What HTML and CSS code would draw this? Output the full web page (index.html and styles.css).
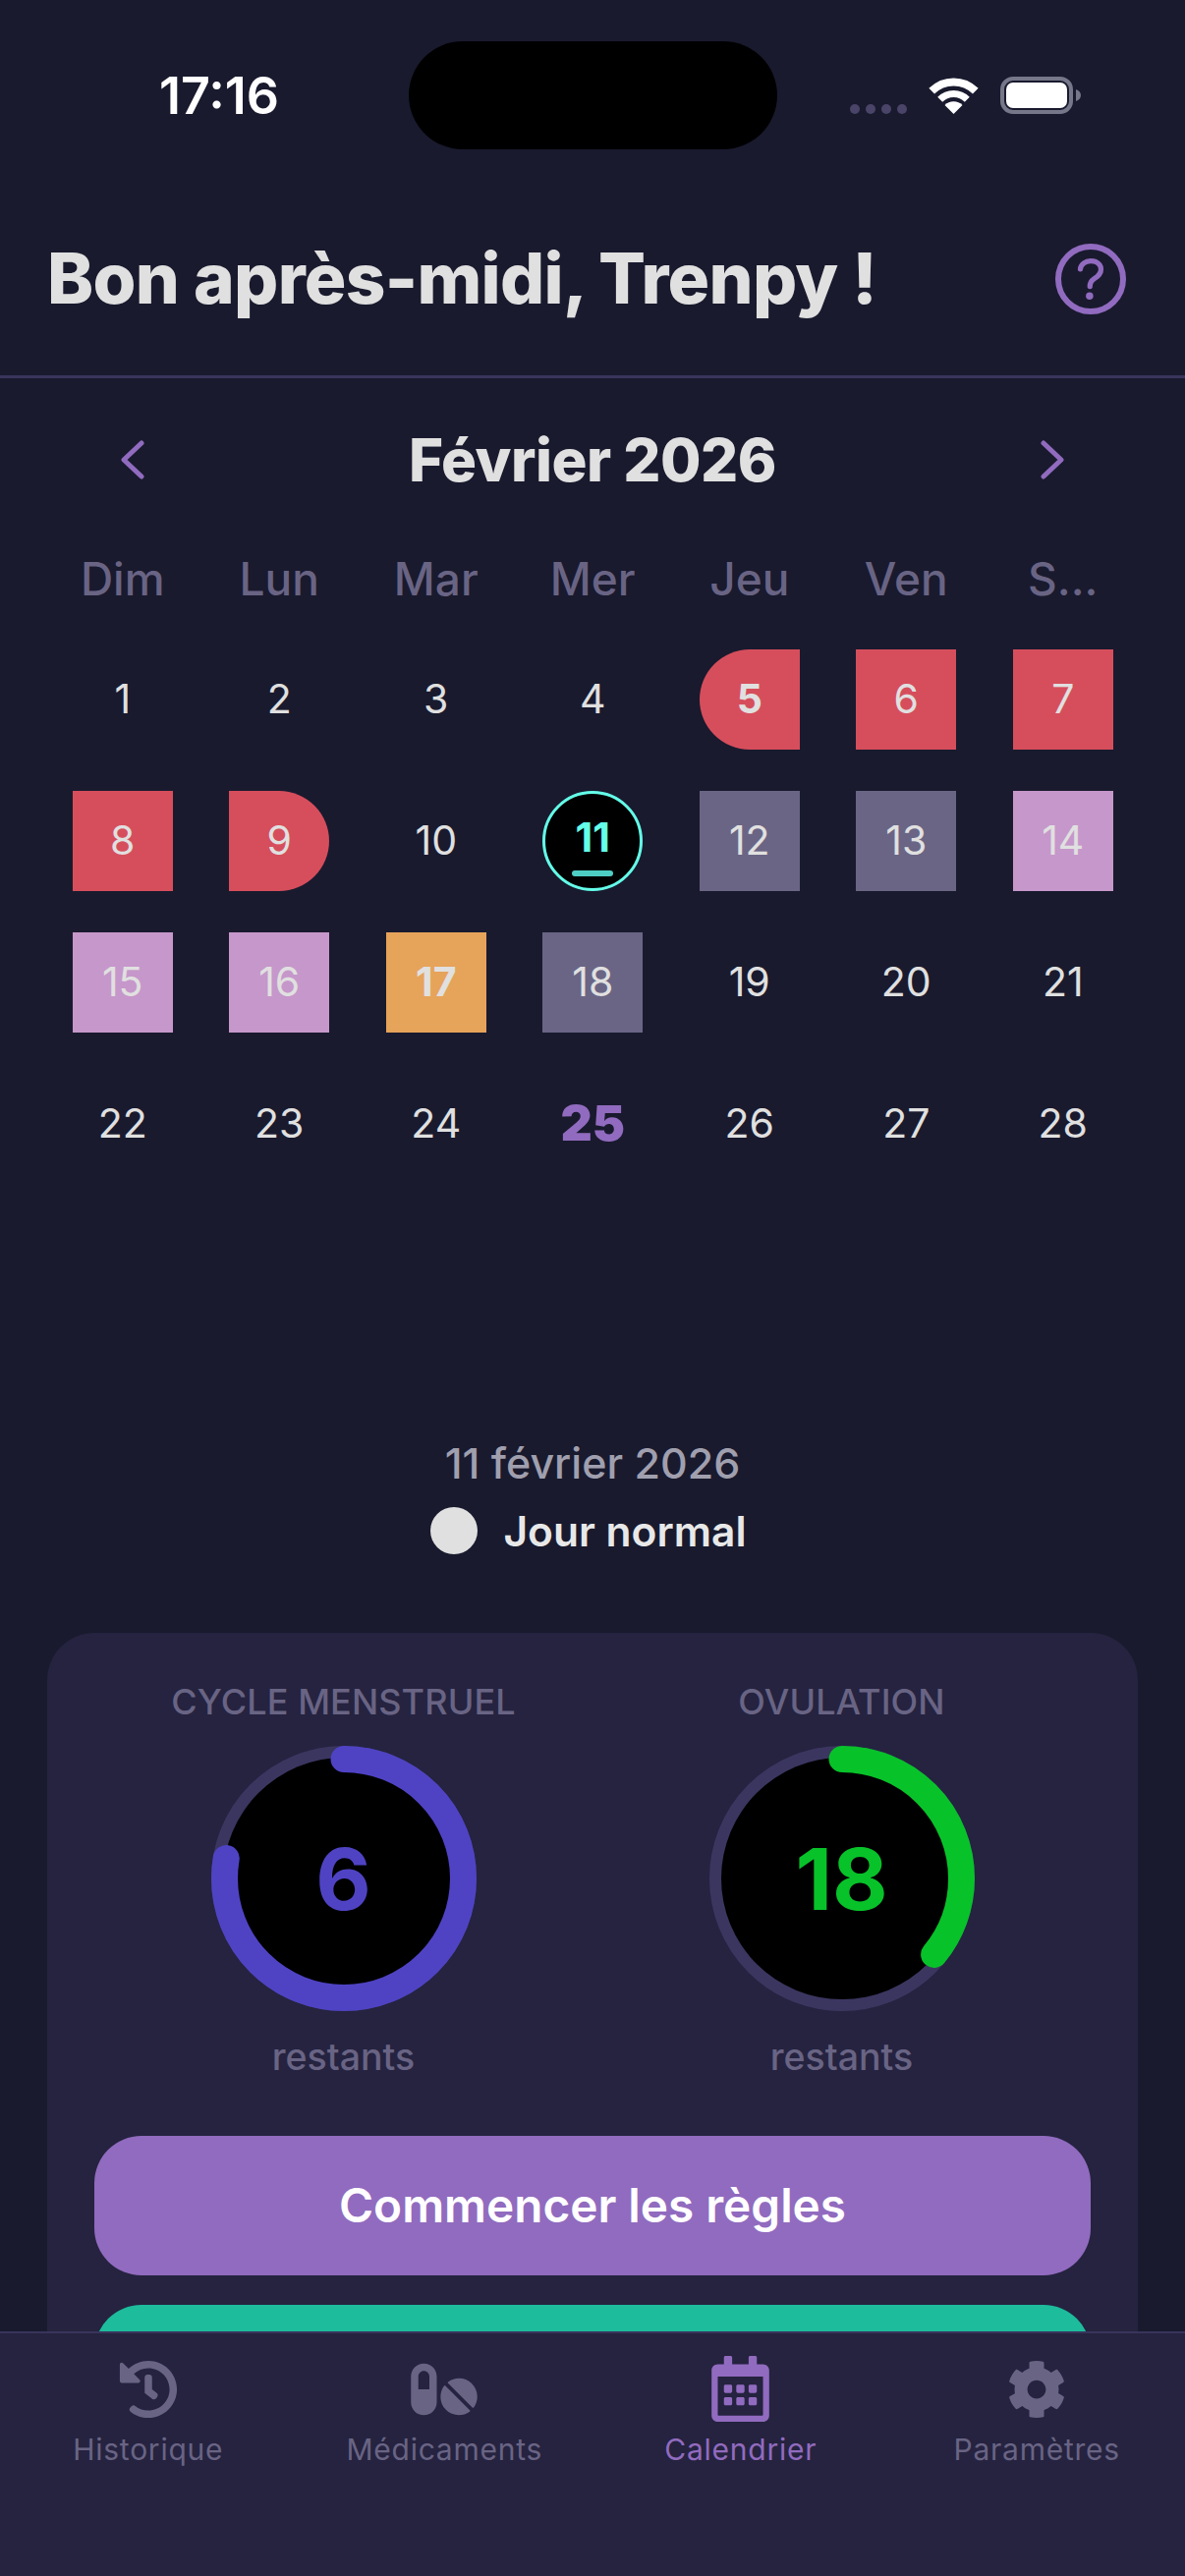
FILE: index.html
```html
<!DOCTYPE html>
<html lang="fr">
<head>
  <meta charset="UTF-8" />
  <meta name="viewport" content="width=device-width, initial-scale=1.0"/>
  <title>Calendrier</title>
  <link rel="stylesheet" href="styles.css">
</head>
<body>
  <div class="app">
    <div class="status-bar">
      <div class="status-time">17:16</div>
      <div class="island"></div>
      <div class="status-icons">
        <div class="signal"><span></span><span></span><span></span><span></span></div>
        <svg class="wifi" width="51" height="37" viewBox="0 0 51 37">
          <path d="M3.2 13.7A31.5 31.5 0 0 1 47.8 13.7" fill="none" stroke="#fff" stroke-width="8"/>
          <path d="M11.7 22.2A19.5 19.5 0 0 1 39.3 22.2" fill="none" stroke="#fff" stroke-width="7"/>
          <path d="M25.5 37L16.5 28A12.7 12.7 0 0 1 34.5 28Z" fill="#fff"/>
        </svg>
        <svg class="battery" width="82" height="38" viewBox="0 0 82 38">
          <rect x="2" y="2" width="70" height="34" rx="11" fill="none" stroke="#77778a" stroke-width="4"/>
          <rect x="6" y="6" width="62" height="26" rx="7" fill="#fff"/>
          <path d="M77 13c3 1 5 3 5 6s-2 5-5 6z" fill="#77778a"/>
        </svg>
      </div>
    </div>

    <header class="top-header">
      <h1>Bon après-midi, Trenpy !</h1>
      <svg class="help-icon" width="96" height="96" viewBox="0 0 512 512">
        <path d="M256 80a176 176 0 10176 176A176 176 0 00256 80z" fill="none" stroke="#916bbf" stroke-width="32" stroke-miterlimit="10"/>
        <path d="M200 202.29s.84-17.5 19.57-32.57C230.68 160.77 244 158.18 256 158c10.93-.14 20.69 1.67 26.53 4.45 10 4.76 29.47 16.38 29.47 41.09 0 26-17 37.81-36.37 50.8S252 281.43 252 296" fill="none" stroke="#916bbf" stroke-width="28" stroke-linecap="round" stroke-miterlimit="10"/>
        <circle cx="250" cy="348" r="20" fill="#916bbf"/>
      </svg>
    </header>

    <main class="content">
      <section class="calendar">
        <div class="month-nav">
          <svg width="24" height="40" viewBox="0 0 24 40"><path d="M21 3L3 20l18 17" fill="none" stroke="#916bbf" stroke-width="5" stroke-linecap="round" stroke-linejoin="round"/></svg>
          <h2>Février 2026</h2>
          <svg width="24" height="40" viewBox="0 0 24 40"><path d="M3 3l18 17L3 37" fill="none" stroke="#916bbf" stroke-width="5" stroke-linecap="round" stroke-linejoin="round"/></svg>
        </div>

        <div class="weekdays">
          <div>Dim</div><div>Lun</div><div>Mar</div><div>Mer</div><div>Jeu</div><div>Ven</div><div>S...</div>
        </div>

        <div class="days">
          <div class="day">1</div>
          <div class="day">2</div>
          <div class="day">3</div>
          <div class="day">4</div>
          <div class="day red start bold">5</div>
          <div class="day red">6</div>
          <div class="day red">7</div>
          <div class="day red">8</div>
          <div class="day red end">9</div>
          <div class="day">10</div>
          <div class="day today">11</div>
          <div class="day gray">12</div>
          <div class="day gray">13</div>
          <div class="day pink">14</div>
          <div class="day pink">15</div>
          <div class="day pink">16</div>
          <div class="day orange bold">17</div>
          <div class="day gray">18</div>
          <div class="day">19</div>
          <div class="day">20</div>
          <div class="day">21</div>
          <div class="day">22</div>
          <div class="day">23</div>
          <div class="day">24</div>
          <div class="day next">25</div>
          <div class="day">26</div>
          <div class="day">27</div>
          <div class="day">28</div>
        </div>
      </section>

      <section class="selected-day">
        <div class="selected-date">11 février 2026</div>
        <div class="day-type">
          <span class="day-dot"></span>
          <span>Jour normal</span>
        </div>
      </section>

      <section class="card">
        <div class="rings">
          <div class="ring-block">
            <div class="ring-title">CYCLE MENSTRUEL</div>
            <div class="ring">
              <svg width="270" height="270" viewBox="0 0 270 270">
                <circle cx="135" cy="135" r="128.5" fill="none" stroke="#3b3660" stroke-width="13"/>
                <circle cx="135" cy="135" r="123" fill="#000"/>
                <circle cx="135" cy="135" r="121.5" fill="none" stroke="#4f43c4" stroke-width="27" stroke-linecap="round" pathLength="100" stroke-dasharray="77.7 100" transform="rotate(-90 135 135)"/>
              </svg>
              <div class="ring-value purple">6</div>
            </div>
            <div class="ring-sub">restants</div>
          </div>
          <div class="ring-block">
            <div class="ring-title">OVULATION</div>
            <div class="ring">
              <svg width="270" height="270" viewBox="0 0 270 270">
                <circle cx="135" cy="135" r="128.5" fill="none" stroke="#3b3660" stroke-width="13"/>
                <circle cx="135" cy="135" r="123" fill="#000"/>
                <circle cx="135" cy="135" r="121.5" fill="none" stroke="#08c22a" stroke-width="27" stroke-linecap="round" pathLength="100" stroke-dasharray="36 100" transform="rotate(-90 135 135)"/>
              </svg>
              <div class="ring-value green">18</div>
            </div>
            <div class="ring-sub">restants</div>
          </div>
        </div>
        <button class="action primary">Commencer les règles</button>
        <div class="action secondary"></div>
      </section>
    </main>

    <nav class="tabs">
      <div class="tab">
        <div class="tab-icon">
          <svg width="60" height="60" viewBox="0 0 512 512"><path d="M504 255.531c.253 136.64-111.18 248.372-247.82 248.468-59.015.042-113.223-20.53-155.822-54.911-11.077-8.94-11.905-25.541-1.839-35.607l11.267-11.267c8.609-8.609 22.353-9.551 31.891-1.984C173.062 425.135 212.781 440 256 440c101.705 0 184-82.311 184-184 0-101.705-82.311-184-184-184-48.814 0-93.149 18.969-126.068 49.932l50.754 50.754c10.08 10.08 2.941 27.314-11.313 27.314H24c-8.837 0-16-7.163-16-16V38.627c0-14.254 17.234-21.393 27.314-11.314l49.372 49.372C129.209 34.136 189.552 8 256 8c136.81 0 247.747 110.78 248 247.531zm-180.912 78.784l9.823-12.63c8.138-10.463 6.253-25.542-4.21-33.679L288 256.349V152c0-13.255-10.745-24-24-24h-16c-13.255 0-24 10.745-24 24v135.651l65.409 50.874c10.463 8.137 25.541 6.253 33.679-4.21z"/></svg>
        </div>
        <div class="tab-label">Historique</div>
      </div>
      <div class="tab">
        <div class="tab-icon">
          <svg width="68" height="60" viewBox="0 0 576 512"><path d="M112 32C50.1 32 0 82.1 0 144v224c0 61.9 50.1 112 112 112s112-50.1 112-112V144c0-61.9-50.1-112-112-112zm48 224H64V144c0-26.5 21.5-48 48-48s48 21.5 48 48v112zm139.7-29.7c-3.5-3.5-9.4-3.1-12.3.8-45.3 62.5-40.8 150.1 15.9 206.7 56.6 56.6 144.2 61.1 206.7 15.9 4-2.9 4.3-8.8.8-12.3L299.7 226.3zm229.8-19c-56.7-56.6-144.2-61.1-206.7-15.9-4 2.9-4.3 8.8-.8 12.3l210.8 210.8c3.5 3.5 9.4 3.1 12.3-.8 45.3-62.6 40.8-150.1-15.6-206.4z"/></svg>
        </div>
        <div class="tab-label">Médicaments</div>
      </div>
      <div class="tab active">
        <div class="tab-icon">
          <svg width="59" height="67" viewBox="0 0 448 512"><path d="M148 288h-40c-6.6 0-12-5.4-12-12v-40c0-6.6 5.4-12 12-12h40c6.6 0 12 5.4 12 12v40c0 6.6-5.4 12-12 12zm108-12v-40c0-6.6-5.4-12-12-12h-40c-6.6 0-12 5.4-12 12v40c0 6.6 5.4 12 12 12h40c6.6 0 12-5.4 12-12zm96 0v-40c0-6.6-5.4-12-12-12h-40c-6.6 0-12 5.4-12 12v40c0 6.6 5.4 12 12 12h40c6.6 0 12-5.4 12-12zm-96 96v-40c0-6.6-5.4-12-12-12h-40c-6.6 0-12 5.4-12 12v40c0 6.6 5.4 12 12 12h40c6.6 0 12-5.4 12-12zm-96 0v-40c0-6.6-5.4-12-12-12h-40c-6.6 0-12 5.4-12 12v40c0 6.6 5.4 12 12 12h40c6.6 0 12-5.4 12-12zm192 0v-40c0-6.6-5.4-12-12-12h-40c-6.6 0-12 5.4-12 12v40c0 6.6 5.4 12 12 12h40c6.6 0 12-5.4 12-12zm96-260v352c0 26.5-21.5 48-48 48H48c-26.5 0-48-21.5-48-48V112c0-26.5 21.5-48 48-48h48V12c0-6.6 5.4-12 12-12h40c6.6 0 12 5.4 12 12v52h128V12c0-6.6 5.4-12 12-12h40c6.6 0 12 5.4 12 12v52h48c26.5 0 48 21.5 48 48zm-48 346V160H48v298c0 3.3 2.7 6 6 6h340c3.3 0 6-2.7 6-6z"/></svg>
        </div>
        <div class="tab-label">Calendrier</div>
      </div>
      <div class="tab">
        <div class="tab-icon">
          <svg width="60" height="60" viewBox="0 0 512 512"><path d="M487.4 315.7l-42.6-24.6c4.3-23.2 4.3-47 0-70.2l42.6-24.6c4.9-2.8 7.1-8.6 5.5-14-11.1-35.6-30-67.8-54.7-94.6-3.8-4.1-10-5.1-14.8-2.3L380.8 110c-17.9-15.4-38.5-27.3-60.8-35.1V25.8c0-5.6-3.9-10.5-9.4-11.7-36.7-8.2-74.3-7.8-109.2 0-5.5 1.2-9.4 6.1-9.4 11.7V75c-22.2 7.9-42.8 19.8-60.8 35.1L88.7 85.5c-4.9-2.8-11-1.9-14.8 2.3-24.7 26.7-43.6 58.9-54.7 94.6-1.7 5.4.6 11.2 5.5 14L67.3 221c-4.3 23.2-4.3 47 0 70.2l-42.6 24.6c-4.9 2.8-7.1 8.6-5.5 14 11.1 35.6 30 67.8 54.7 94.6 3.8 4.1 10 5.1 14.8 2.3l42.6-24.6c17.9 15.4 38.5 27.3 60.8 35.1v49.2c0 5.6 3.9 10.5 9.4 11.7 36.7 8.2 74.3 7.8 109.2 0 5.5-1.2 9.4-6.1 9.4-11.7v-49.2c22.2-7.9 42.8-19.8 60.8-35.1l42.6 24.6c4.9 2.8 11 1.9 14.8-2.3 24.7-26.7 43.6-58.9 54.7-94.6 1.5-5.5-.7-11.3-5.6-14.1zM256 336c-44.1 0-80-35.9-80-80s35.9-80 80-80 80 35.9 80 80-35.9 80-80 80z"/></svg>
        </div>
        <div class="tab-label">Paramètres</div>
      </div>
    </nav>
  </div>
</body>
</html>
```

FILE: styles.css
```css
* {
  margin: 0;
  padding: 0;
  box-sizing: border-box;
  font-family: Inter, "Liberation Sans", sans-serif;
}
body {
  background-color: #191a2e;
  color: #e0e0e0;
}
.app {
  width: 1206px;
  height: 2622px;
  display: flex;
  flex-direction: column;
  overflow: hidden;
}

/* status bar */
.status-bar {
  height: 152px;
  padding-top: 42px;
  display: flex;
  flex-shrink: 0;
}
.status-time {
  width: 416px;
  height: 110px;
  line-height: 112px;
  padding-left: 162px;
  font-size: 52px;
  font-weight: 600;
  color: #fff;
}
.island {
  width: 375px;
  height: 110px;
  border-radius: 55px;
  background-color: #000;
}
.status-icons {
  height: 74px;
  padding-left: 74px;
  display: flex;
  align-items: flex-end;
  gap: 22px;
}
.signal {
  display: flex;
  gap: 6px;
}
.signal span {
  width: 10px;
  height: 10px;
  border-radius: 50%;
  background-color: #4a4468;
}
.wifi, .battery {
  display: block;
}

/* header */
.top-header {
  height: 233px;
  padding: 32px 48px 0 48px;
  display: flex;
  align-items: center;
  justify-content: space-between;
  border-bottom: 3px solid #38345c;
  flex-shrink: 0;
}
.top-header h1 {
  font-size: 71px;
  font-weight: 800;
  letter-spacing: -0.7px;
  color: #e0e0e0;
}
.help-icon {
  margin-top: 2px;
}

/* calendar */
.content {
  flex: 1;
  overflow: hidden;
}
.month-nav {
  height: 166px;
  padding: 0 123px;
  display: flex;
  align-items: center;
  justify-content: space-between;
}
.month-nav h2 {
  font-size: 60px;
  font-weight: 800;
  letter-spacing: -0.5px;
  color: #e0e0e0;
}
.weekdays {
  height: 76px;
  padding: 0 44.5px 0 45px;
  display: grid;
  grid-template-columns: repeat(7, 1fr);
  align-items: center;
  text-align: center;
  font-size: 46px;
  font-weight: 500;
  color: #696484;
}
.days {
  margin-top: 34px;
  padding: 0 44.5px 0 45px;
  display: grid;
  grid-template-columns: repeat(7, 1fr);
  row-gap: 42px;
  justify-items: center;
}
.day {
  width: 102px;
  height: 102px;
  padding-bottom: 2px;
  display: flex;
  align-items: center;
  justify-content: center;
  font-size: 41px;
  color: #e0e0e0;
}
.day.red { background-color: #d64e5c; }
.day.gray { background-color: #6a6585; }
.day.pink { background-color: #c697ca; }
.day.orange { background-color: #e6a35a; }
.day.start { border-radius: 51px 0 0 51px; }
.day.end { border-radius: 0 51px 51px 0; }
.day.bold { font-weight: 700; }
.day.next {
  font-size: 50px;
  font-weight: 900;
  color: #916bbf;
}
.day.today {
  position: relative;
  padding-bottom: 8px;
  border: 3px solid #64ffe9;
  border-radius: 50%;
  background-color: #000;
  color: #64ffe9;
  font-weight: 700;
}
.day.today::after {
  content: "";
  position: absolute;
  left: 27px;
  bottom: 12px;
  width: 42px;
  height: 6px;
  border-radius: 3px;
  background-color: #4ecdc4;
}

/* selected day */
.selected-day {
  margin-top: 270px;
  text-align: center;
}
.selected-date {
  height: 50px;
  line-height: 48px;
  font-size: 43px;
  font-weight: 500;
  color: #a09fae;
}
.day-type {
  margin-top: 19px;
  height: 48px;
  padding-right: 8px;
  display: flex;
  align-items: center;
  justify-content: center;
  gap: 26px;
  font-size: 42.5px;
  font-weight: 600;
  color: #e8e8e8;
}
.day-dot {
  width: 48px;
  height: 48px;
  border-radius: 50%;
  background-color: #e0e0e0;
}

/* card */
.card {
  margin: 80px 48px 0;
  padding: 48px 48px 0;
  height: 800px;
  border-radius: 48px;
  background-color: #252340;
}
.rings {
  display: flex;
  justify-content: space-between;
}
.ring-block {
  width: 507px;
  display: flex;
  flex-direction: column;
  align-items: center;
}
.ring-title {
  height: 44px;
  line-height: 44px;
  font-size: 36px;
  font-weight: 500;
  letter-spacing: 0.1px;
  color: #696484;
}
.ring {
  position: relative;
  margin-top: 23px;
  width: 270px;
  height: 270px;
}
.ring svg {
  display: block;
}
.ring-value {
  position: absolute;
  top: 1px;
  left: 0;
  width: 270px;
  height: 270px;
  line-height: 270px;
  text-align: center;
  font-size: 87px;
  font-weight: 700;
}
.ring-value.purple { color: #4f43c4; }
.ring-value.green { color: #08c22a; }
.ring-sub {
  margin-top: 25px;
  height: 44px;
  line-height: 44px;
  font-size: 37.5px;
  font-weight: 500;
  color: #696484;
}
.action {
  display: block;
  width: 100%;
  height: 142px;
  border: none;
  border-radius: 48px;
  color: #fff;
  font-size: 47.7px;
  font-weight: 600;
}
.action.primary {
  margin-top: 58px;
  background-color: #916bbf;
}
.action.secondary {
  margin-top: 30px;
  background-color: #1dbc9c;
}

/* bottom tabs */
.tabs {
  height: 249px;
  flex-shrink: 0;
  display: grid;
  grid-template-columns: repeat(4, 1fr);
  border-top: 2px solid #38345c;
  background-color: #252340;
}
.tab {
  display: flex;
  flex-direction: column;
  align-items: center;
  color: #696484;
}
.tab.active {
  color: #916bbf;
}
.tab-icon {
  margin-top: 23px;
  height: 67px;
  display: flex;
  align-items: center;
}
.tab-icon svg {
  fill: currentColor;
}
.tab-label {
  margin-top: 6px;
  font-size: 30px;
  line-height: 44px;
  letter-spacing: 0.75px;
}
```
